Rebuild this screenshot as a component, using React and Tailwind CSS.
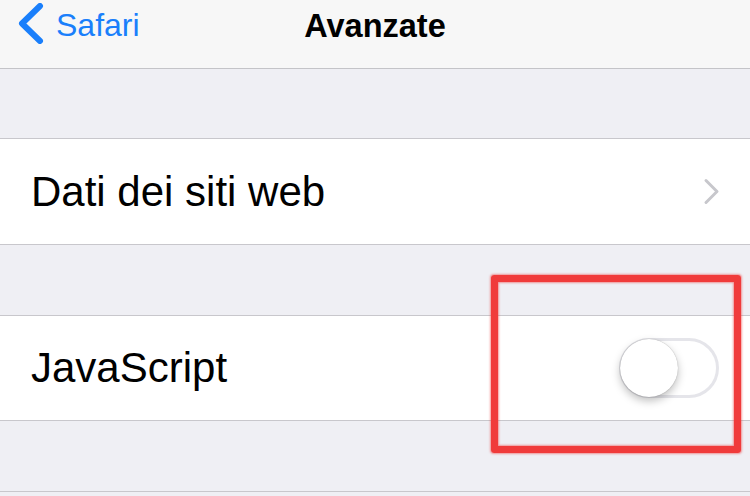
export default function App() {
  const font = { fontFamily: '"Liberation Sans", Arial, sans-serif' };
  return (
    <div className="relative w-[750px] h-[496px] overflow-hidden bg-[#efeff4]" style={font}>
      {/* Nav bar */}
      <div className="relative h-[69px] bg-[#f7f7f7] border-b border-[#c4c4c8] flex items-start pl-[17px]">
        <svg width="27" height="41" viewBox="0 0 27 41" className="mt-[3px]">
          <path d="M23 3 L5 20.5 L23 38" fill="none" stroke="#1a7ffb" strokeWidth="6" strokeLinecap="round" strokeLinejoin="round" />
        </svg>
        <span className="ml-[12px] mt-[9px] text-[32px] leading-none text-[#1a7ffb]">Safari</span>
        <div className="absolute left-0 right-0 top-[10px] text-center text-[32.5px] leading-none font-bold text-black">Avanzate</div>
      </div>
      {/* gray band */}
      <div className="h-[70px] border-b border-[#c8c7cc]" />
      {/* row 1 */}
      <div className="h-[106px] bg-white border-b border-[#c8c7cc] flex items-center justify-between pl-[31px] pr-[30px]">
        <span className="text-[42px] leading-none text-black">Dati dei siti web</span>
        <svg width="17" height="27" viewBox="0 0 17 27">
          <path d="M3 2.5 L14 13.5 L3 24.5" fill="none" stroke="#c7c7cc" strokeWidth="3" strokeLinecap="round" strokeLinejoin="round" />
        </svg>
      </div>
      {/* gray band */}
      <div className="h-[71px] border-b border-[#c8c7cc]" />
      {/* row 2 */}
      <div className="h-[105px] bg-white border-b border-[#c8c7cc] flex items-center justify-between pl-[31px] pr-[31px]">
        <span className="text-[42px] leading-none text-black">JavaScript</span>
        <div className="relative w-[100px] h-[60px] rounded-full border-[3px] border-[#e5e5ea] bg-white">
          <div className="absolute left-[-2px] top-[-2px] w-[58px] h-[58px] rounded-full bg-white shadow-[0_4px_8px_rgba(0,0,0,0.25),0_0_1px_rgba(0,0,0,0.35)]" />
        </div>
      </div>
      {/* gray band */}
      <div className="h-[71px] border-b border-[#c8c7cc]" />
      {/* red annotation box */}
      <div className="absolute left-[491px] top-[275px] w-[250px] h-[178px] border-[7px] border-[#f03b3b] rounded-[3px] shadow-[0_0_2px_1px_rgba(240,59,59,0.5),inset_0_0_2px_1px_rgba(240,59,59,0.5)]" />
    </div>
  );
}
